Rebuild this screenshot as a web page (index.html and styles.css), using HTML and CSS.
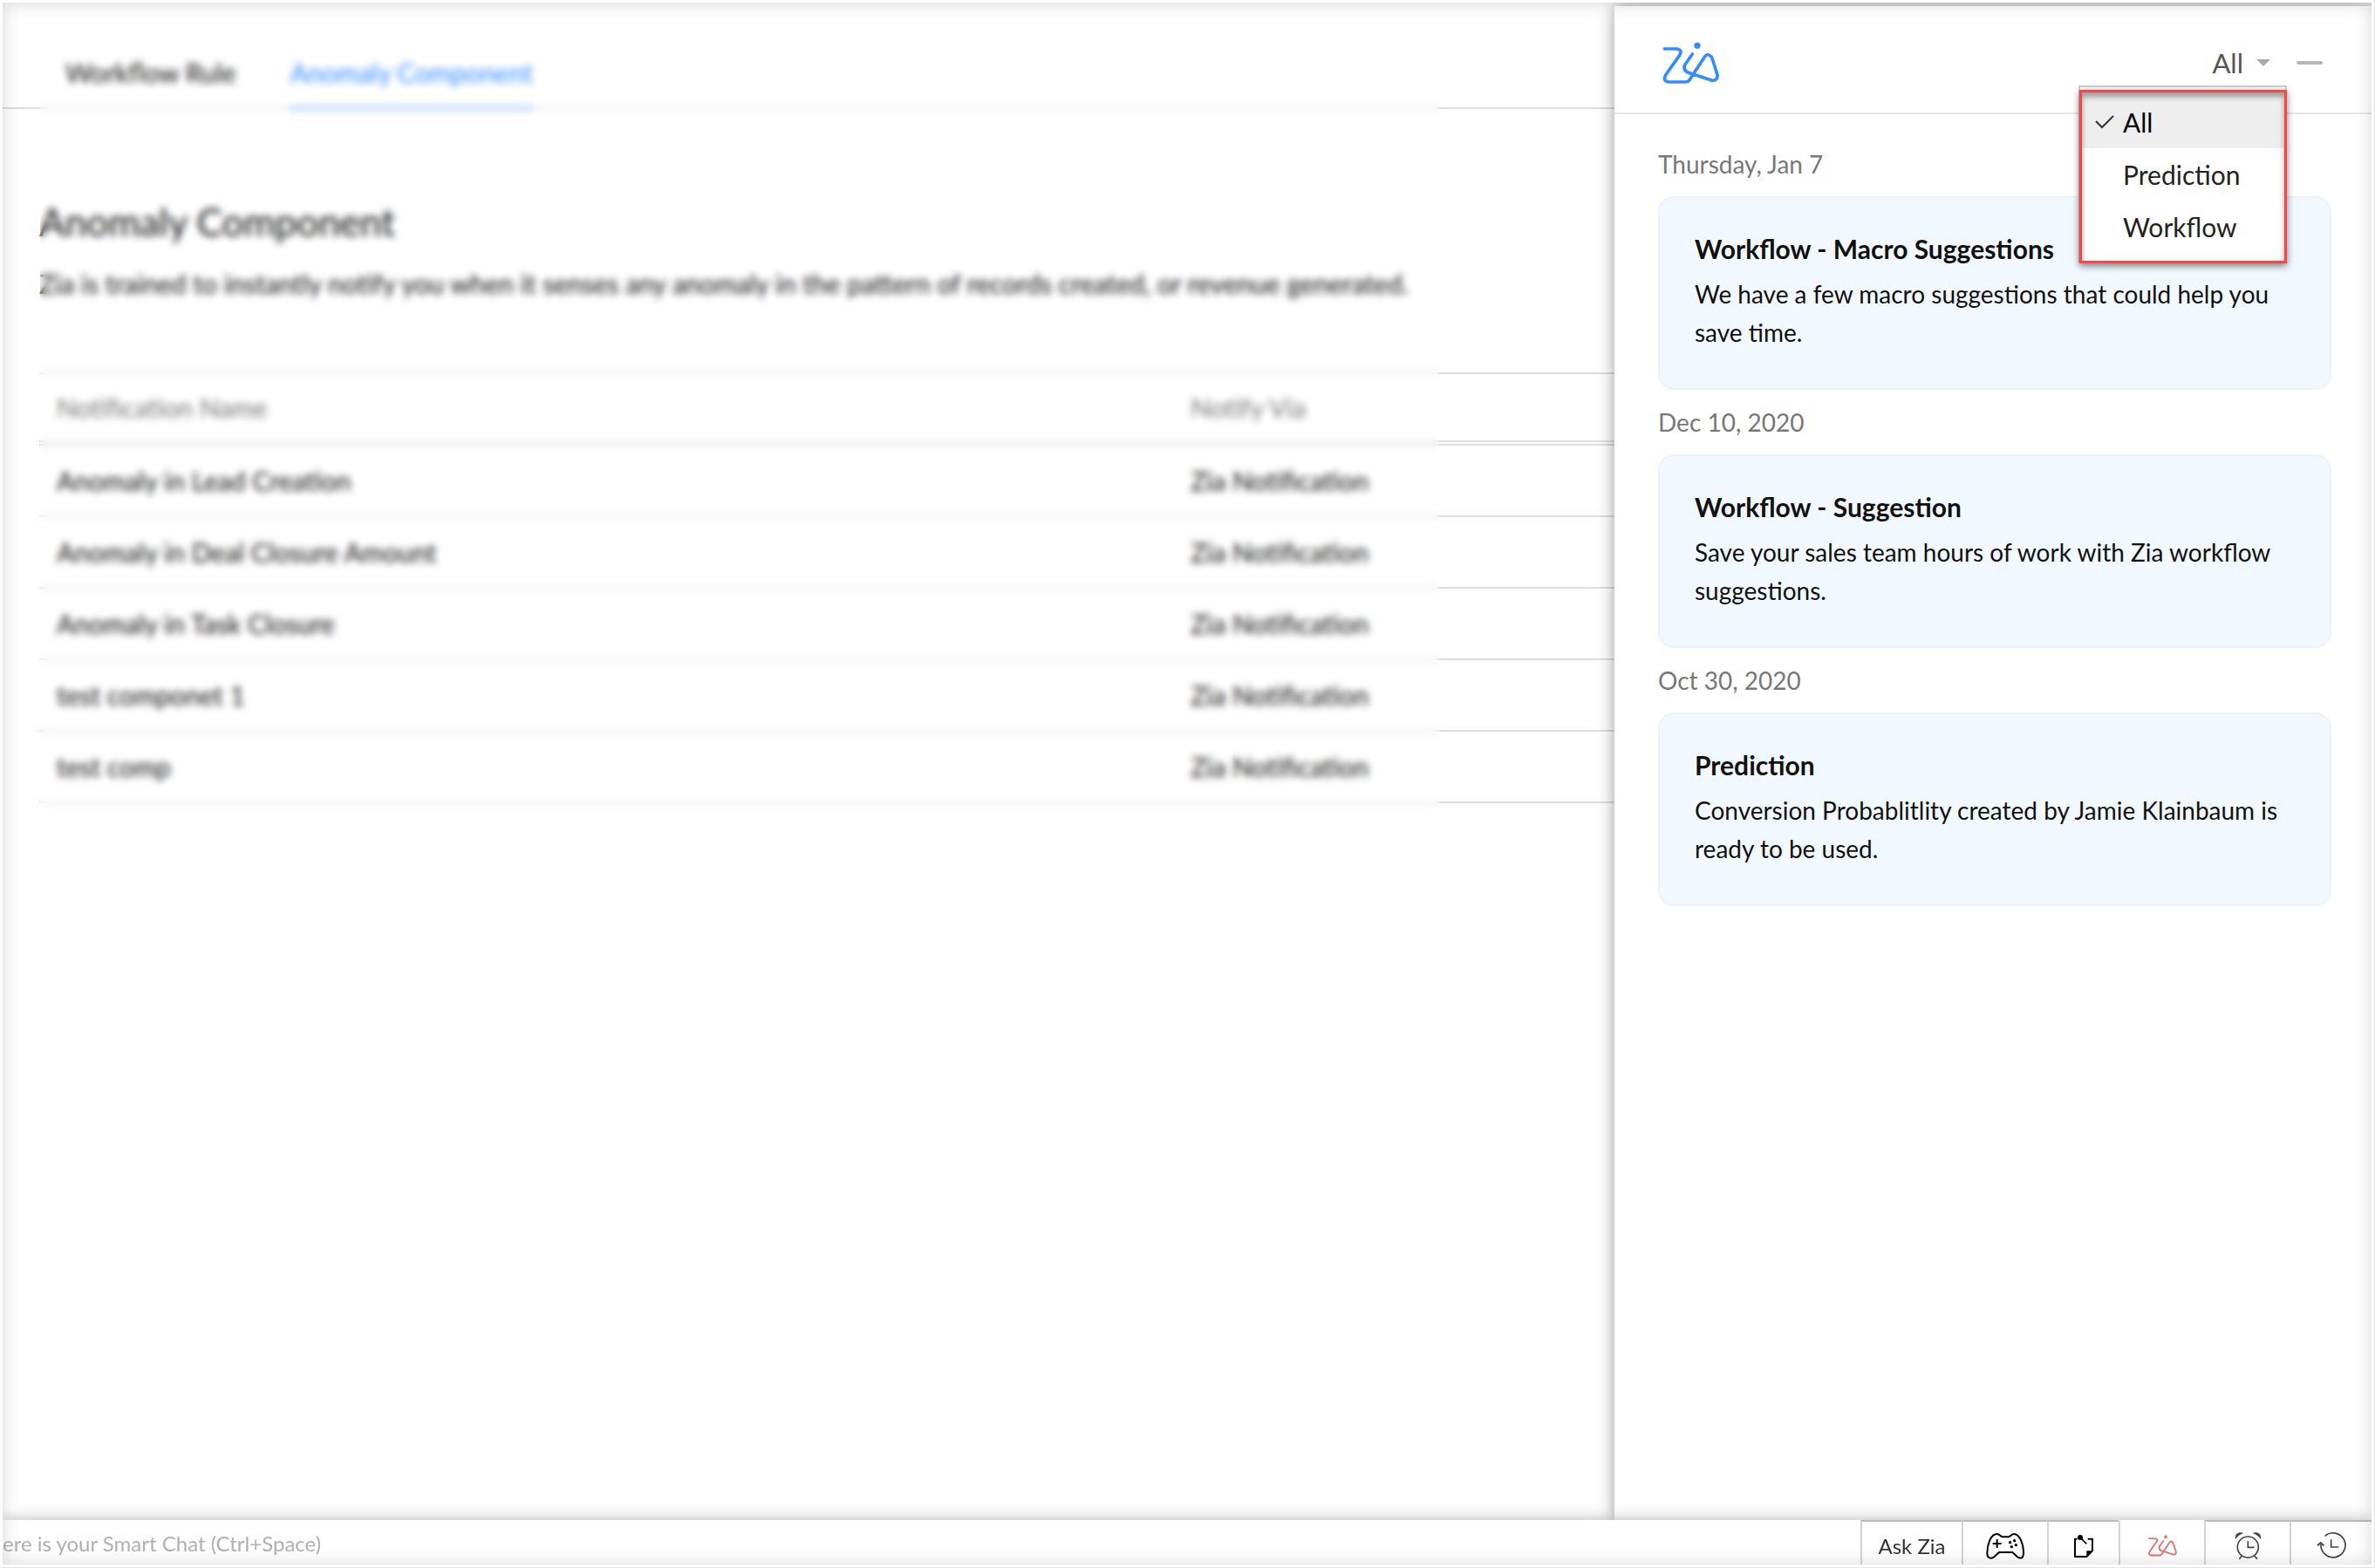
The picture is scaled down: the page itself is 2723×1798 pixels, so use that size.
FILE: index.html
```html
<!DOCTYPE html>
<html lang="en">
<head>
  <meta charset="UTF-8">
  <meta name="viewport" content="width=device-width, initial-scale=1.0">
  <title>Zia Notifications</title>
  <link rel="stylesheet" href="styles.css">
</head>
<body>
<svg class="defs" aria-hidden="true">
  <symbol id="zia" viewBox="0 0 198 147">
    <path d="M10 24H50Q74 26 62 46L14 114Q4 134 24 138H84Q92 138 97 130L147 53Q158 37 170 50Q174 54 175 60L192 113Q194 134 174 133L90 105Q72 95 81 78L106 42" fill="none" stroke="currentColor" stroke-width="11" stroke-linecap="round" stroke-linejoin="round"/>
    <circle cx="123" cy="13" r="11" fill="currentColor"/>
  </symbol>
</svg>
<div class="app">
  <div class="main">
    <main class="content">
      <nav class="tabs">
        <a href="#" class="tab">Workflow Rule</a>
        <a href="#" class="tab active">Anomaly Component</a>
      </nav>
      <div class="page">
        <h1>Anomaly Component</h1>
        <p class="intro">Zia is trained to instantly notify you when it senses any anomaly in the pattern of records created, or revenue generated.</p>
        <table>
          <thead>
            <tr><th class="name-col">Notification Name</th><th>Notify Via</th></tr>
          </thead>
          <tbody>
            <tr><td>Anomaly in Lead Creation</td><td>Zia Notification</td></tr>
            <tr><td>Anomaly in Deal Closure Amount</td><td>Zia Notification</td></tr>
            <tr><td>Anomaly in Task Closure</td><td>Zia Notification</td></tr>
            <tr><td>test componet 1</td><td>Zia Notification</td></tr>
            <tr><td>test comp</td><td>Zia Notification</td></tr>
          </tbody>
        </table>
      </div>
      <div class="blur"></div>
    </main>

    <aside class="panel">
      <header class="panel-header">
        <svg class="logo" role="img" aria-label="Zia"><use href="#zia"/></svg>
        <div class="filter">
          <button class="filter-button" aria-haspopup="true">All<span class="caret"></span></button>
          <div class="menu">
            <button class="menu-item selected">
              <svg class="check" viewBox="0 0 22 16"><path d="M1 7l7 7L21 1" fill="none" stroke="#333" stroke-width="2"/></svg>
              All
            </button>
            <button class="menu-item">Prediction</button>
            <button class="menu-item">Workflow</button>
          </div>
        </div>
        <button class="minimize" aria-label="Minimize"></button>
      </header>
      <div class="feed">
        <p class="date">Thursday, Jan 7</p>
        <article class="card">
          <h2>Workflow - Macro Suggestions</h2>
          <p>We have a few macro suggestions that could help you save time.</p>
        </article>
        <p class="date">Dec 10, 2020</p>
        <article class="card">
          <h2>Workflow - Suggestion</h2>
          <p>Save your sales team hours of work with Zia workflow suggestions.</p>
        </article>
        <p class="date">Oct 30, 2020</p>
        <article class="card">
          <h2>Prediction</h2>
          <p>Conversion Probablitlity created by Jamie Klainbaum is ready to be used.</p>
        </article>
      </div>
    </aside>
  </div>

  <footer class="bar">
    <input class="chat" type="text" aria-label="Smart Chat" placeholder="ere is your Smart Chat (Ctrl+Space)">
    <button class="tool ask">Ask Zia</button>
    <button class="tool" aria-label="Games">
      <svg width="46" height="31" viewBox="0 0 138 93" fill="none" stroke="#000" stroke-width="6">
        <path d="M41 6C50 6 54 16 60 16H80C86 16 90 6 99 6C120 6 133 45 132 72C132 92 118 92 108 82L94 69H48L34 82C22 94 7 90 7 72C7 45 18 6 41 6Z"/>
        <path d="M41 24V54M26 39H56"/>
        <g fill="#000" stroke="none"><circle cx="86" cy="35" r="5"/><circle cx="101" cy="29" r="5"/><circle cx="106" cy="44" r="5"/><circle cx="91" cy="50" r="5"/></g>
      </svg>
    </button>
    <button class="tool note" aria-label="Sticky notes">
      <svg width="24" height="28" viewBox="0 0 72 84" fill="none" stroke="#000" stroke-width="6">
        <path d="M14 17H6V78H46L66 58V17H50" stroke-linejoin="round"/>
        <path d="M24 12L46 34" stroke-width="5"/>
        <circle cx="24" cy="12" r="9" fill="#000" stroke="none"/>
        <path d="M46 79V58H68Z" fill="#000" stroke="none"/>
      </svg>
    </button>
    <button class="tool current" aria-label="Zia notifications">
      <svg width="34" height="25"><use href="#zia"/></svg>
    </button>
    <button class="tool" aria-label="Reminders">
      <svg width="33" height="33" viewBox="0 0 99 99" fill="none" stroke="#444" stroke-width="5">
        <circle cx="49" cy="54" r="36"/>
        <path d="M49 34V55H71M19 95L28 84M81 95L71 84"/>
        <path d="M6 28C2 8 18 -1 34 6C22 10 12 17 6 28ZM93 28C97 8 81 -1 65 6C77 10 87 17 93 28Z" fill="#444" stroke="none"/>
      </svg>
    </button>
    <button class="tool recent" aria-label="Recent items">
      <svg width="35" height="33" viewBox="0 0 105 99" fill="none" stroke="#444" stroke-width="5">
        <path d="M29 16A42 42 0 1 1 15 44"/>
        <path d="M3 49L14 39L25 49" stroke-width="6"/>
        <path d="M50 28V54H76"/>
      </svg>
    </button>
  </footer>
</div>
</body>
</html>
```
FILE: styles.css
```css
* {
  box-sizing: border-box;
}
body {
  margin: 0;
  height: 100vh;
  padding: 3px;
  border-right: 1px solid #e5e5e5;
  border-bottom: 1px solid #e5e5e5;
  background: #fff;
  color: #111;
  font-family: Lato, sans-serif;
  font-size: 28px;
  overflow: hidden;
}
h1, h2, p {
  margin: 0;
}
a {
  text-decoration: none;
}
button, input {
  border: none;
  background: none;
  padding: 0;
  font-family: inherit;
  color: inherit;
}
.defs {
  display: none;
}
.app {
  position: relative;
  height: 100%;
  display: flex;
  flex-direction: column;
  overflow: hidden;
}
/* soft inner edge around the whole window */
.app::after {
  content: "";
  position: absolute;
  inset: 0;
  z-index: 10;
  box-shadow: inset 0 0 20px rgba(0,0,0,0.17);
  pointer-events: none;
}
.main {
  flex: 1;
  min-height: 0;
  display: flex;
}

/* left side */
.content {
  position: relative;
  flex: 1;
  min-width: 0;
}
.tabs {
  display: flex;
  align-items: flex-end;
  gap: 62px;
  height: 122px;
  padding-left: 72px;
  border-bottom: 2px solid #ddd;
}
.tab {
  margin-bottom: -2px;
  padding-bottom: 20px;
  border-bottom: 2px solid transparent;
  color: #111;
  font-size: 30px;
  line-height: 40px;
}
.tab.active {
  color: #338cff;
  border-color: #338cff;
}
.page {
  padding: 104px 0 0 42px;
}
h1 {
  font-size: 44px;
  font-weight: 400;
  line-height: 50px;
}
.intro {
  margin: 26px 0 82px;
  font-size: 30px;
  line-height: 40px;
}
table {
  width: 100%;
  border-spacing: 0;
  font-size: 30px;
  text-align: left;
}
th {
  height: 84px;
  padding: 0 20px;
  border-top: 2px solid #ddd;
  border-bottom: 6px double #ddd;
  color: #777;
  font-weight: 400;
}
td {
  height: 82px;
  padding: 0 20px;
  border-bottom: 2px solid #ddd;
}
.name-col {
  width: 72%;
}
.blur {
  position: absolute;
  top: 0;
  bottom: 0;
  left: 43px;
  right: 201px;
  backdrop-filter: blur(4px);
}

/* Zia panel */
.panel {
  position: relative;
  flex: 0 0 868px;
  margin-top: 4px;
  background: #fff;
  box-shadow: 0 0 18px rgba(0,0,0,0.4);
}
.panel-header {
  display: flex;
  align-items: center;
  height: 124px;
  padding: 8px 56px 0 54px;
  border-bottom: 2px solid #e5e5e5;
}
.logo {
  width: 66px;
  height: 49px;
  color: #338cff;
}
.filter {
  position: relative;
  margin-left: auto;
}
.filter-button {
  display: flex;
  align-items: center;
  gap: 15px;
  color: #555;
  font-size: 31px;
  line-height: 40px;
}
.caret {
  border: 8px solid transparent;
  border-top-color: #aaa;
  border-bottom: none;
}
.minimize {
  width: 30px;
  height: 4px;
  margin-left: 30px;
  border-radius: 2px;
  background: #b5b5b5;
}
.menu {
  position: absolute;
  top: 46px;
  right: -19px;
  width: 239px;
  padding: 10px 0;
  border: 2px solid #ccc;
  background: #fff;
}
/* red callout around the options */
.menu::after {
  content: "";
  position: absolute;
  inset: 3px -2px -2px -1px;
  border: 3px solid #ff4343;
  box-shadow: 0 3px 8px rgba(0,0,0,0.5), inset 0 5px 6px rgba(0,0,0,0.35);
  pointer-events: none;
}
.menu-item {
  display: flex;
  align-items: center;
  width: 100%;
  height: 60px;
  padding-left: 49px;
  color: #222;
  font-size: 30px;
}
.menu-item.selected {
  padding-left: 17px;
  background: #eee;
  box-shadow: 0 -6px #eee;
  color: #000;
}
.check {
  width: 22px;
  height: 16px;
  margin-right: 10px;
}
.feed {
  padding: 20px 46px 0 50px;
}
.date {
  color: #777;
  font-size: 28px;
  line-height: 74px;
}
.card {
  padding: 36px 40px 42px;
  border: 2px solid #ecf3f8;
  border-radius: 18px;
  background: #f1f8ff;
  line-height: 44px;
}
.card h2 {
  margin-bottom: 8px;
  font-size: 30px;
}

/* bottom bar */
.bar {
  position: relative;
  display: flex;
  height: 51px;
  background: #fff;
  box-shadow: 0 0 18px rgba(0,0,0,0.3);
}
.chat {
  flex: 1;
  padding-top: 2px;
  font-size: 24px;
}
.chat::placeholder {
  color: #b0b0b0;
}
.tool {
  display: flex;
  align-items: center;
  justify-content: center;
  width: 98px;
  padding-top: 6px;
  border-top: 2px solid #bbb;
  border-left: 2px solid #d4d4d4;
}
.tool.ask {
  width: 116px;
  color: #333;
  font-size: 24px;
}
.tool.note {
  width: 82px;
}
.tool.recent {
  width: 94px;
}
.tool.current {
  border-top-color: #fff;
  color: #e57373;
}
```
